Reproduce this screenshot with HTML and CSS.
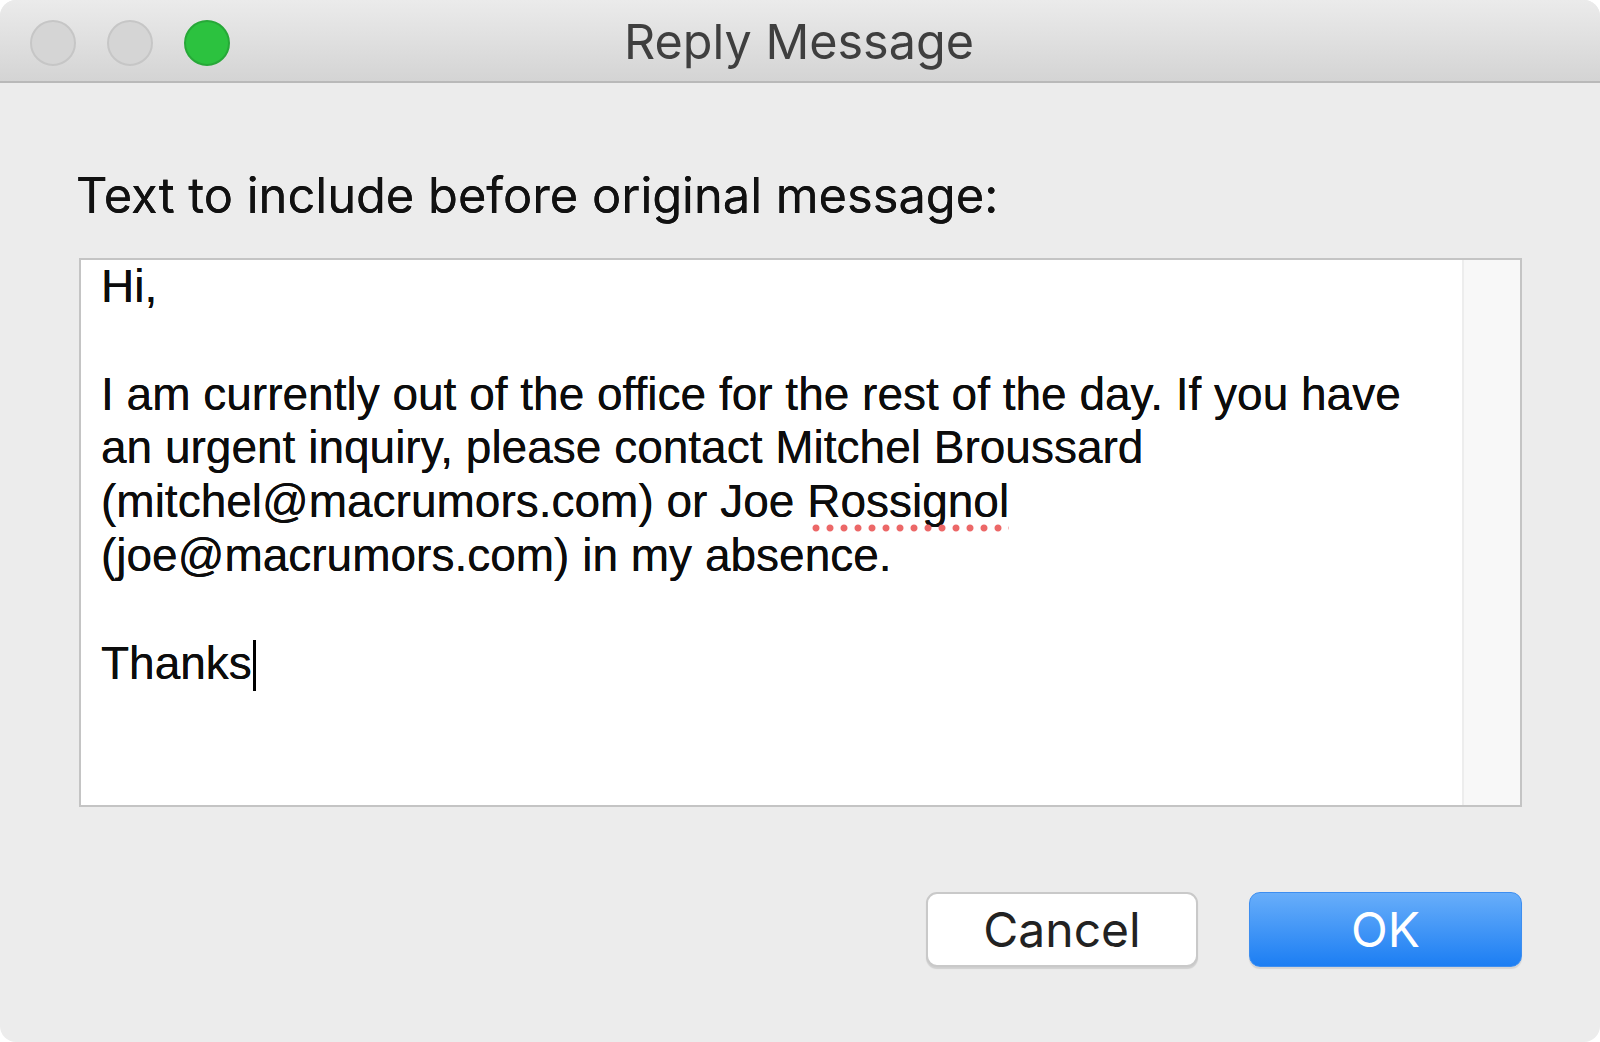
FILE: index.html
```html
<!DOCTYPE html>
<html lang="en">
<head>
<meta charset="utf-8">
<title>Reply Message</title>
<link rel="stylesheet" href="styles.css">
</head>
<body>
<div class="window">
  <header class="titlebar">
    <div class="lights">
      <span class="light light-off"></span>
      <span class="light light-off"></span>
      <span class="light light-zoom"></span>
    </div>
    <div class="title">Reply Message</div>
  </header>
  <main class="content">
    <div class="label">Text to include before original message:</div>
    <div class="textbox">
      <div class="text">
        <p>Hi,</p>
        <p class="blank">&nbsp;</p>
        <p>I am currently out of the office for the rest of the day. If you have</p>
        <p>an urgent inquiry, please contact Mitchel Broussard</p>
        <p>(mitchel@macrumors.com) or Joe <span class="misspelled">Rossignol</span></p>
        <p>(joe@macrumors.com) in my absence.</p>
        <p class="blank">&nbsp;</p>
        <p>Thanks<span class="caret"></span></p>
      </div>
      <div class="scrolltrack"></div>
    </div>
    <div class="buttons">
      <button class="btn btn-cancel">Cancel</button>
      <button class="btn btn-ok">OK</button>
    </div>
  </main>
</div>
</body>
</html>
```

FILE: styles.css
```css
html, body {
  margin: 0;
  padding: 0;
  background: #ffffff;
}
body {
  width: 1600px;
  height: 1042px;
  overflow: hidden;
}
.window {
  width: 1600px;
  height: 1042px;
  background: #ececec;
  border-radius: 16px;
  overflow: hidden;
  display: flex;
  flex-direction: column;
}
.titlebar {
  height: 81px;
  flex: 0 0 auto;
  background: linear-gradient(#ebebeb, #d4d4d4);
  border-bottom: 2px solid #b9b9b9;
  position: relative;
  display: flex;
  align-items: center;
  justify-content: center;
}
.lights {
  position: absolute;
  left: 30px;
  top: 20px;
  display: flex;
  gap: 31px;
}
.light {
  width: 46px;
  height: 46px;
  border-radius: 50%;
  box-sizing: border-box;
}
.light-off {
  background: #d5d5d5;
  border: 2px solid #c6c6c6;
}
.light-zoom {
  background: #2cc23f;
  border: 2px solid #27a838;
}
.title {
  font-family: Inter, "Liberation Sans", sans-serif;
  font-size: 48.5px;
  color: #3f3f3f;
  margin-left: -2px;
  margin-top: 2px;
}
.content {
  flex: 1;
  padding: 86px 78px 0 78px;
  display: flex;
  flex-direction: column;
}
.label {
  font-family: Inter, "Liberation Sans", sans-serif;
  font-size: 48.8px;
  line-height: 54px;
  color: #111111;
  margin-left: -2px;
  text-shadow: 0 0 0.6px #111111;
}
.textbox {
  margin-top: 35px;
  height: 549px;
  box-sizing: border-box;
  border: 2px solid #c4c4c4;
  background: #ffffff;
  display: flex;
  margin-left: 1px;
}
.text {
  flex: 1;
  padding: 0 0 0 20px;
  font-family: "Liberation Sans", Arial, sans-serif;
  font-size: 46px;
  line-height: 53.8px;
  color: #0c0c0c;
  text-shadow: 0 0 0.5px #0c0c0c;
}
.text p {
  margin: 0;
  white-space: nowrap;
}
.misspelled {
  position: relative;
}
.misspelled::after {
  content: "";
  position: absolute;
  left: 2px;
  right: 0;
  bottom: -5px;
  height: 8px;
  background-image: radial-gradient(circle, #ec6868 0 3px, rgba(236,104,104,0.35) 3.6px, transparent 4px);
  background-size: 14px 8px;
  background-repeat: repeat-x;
}
.caret {
  display: inline-block;
  width: 3px;
  height: 51px;
  background: #000;
  vertical-align: -12px;
  margin-left: 1px;
}
.scrolltrack {
  width: 56px;
  background: #f8f8f8;
  border-left: 2px solid #ededed;
}
.buttons {
  margin-top: 85px;
  display: flex;
  justify-content: flex-end;
  gap: 51px;
}
.btn {
  height: 75px;
  border-radius: 11px;
  font-family: Inter, "Liberation Sans", sans-serif;
  font-size: 48px;
  padding: 0;
  box-sizing: border-box;
}
.btn-cancel {
  width: 272px;
  background: #ffffff;
  color: #222222;
  border: 2px solid #c9c9c9;
  box-shadow: 0 2px 1px rgba(0,0,0,0.12);
}
.btn-ok {
  width: 273px;
  background: linear-gradient(#68aefa, #1c7ef3);
  color: #ffffff;
  border: 1px solid #3d8ef0;
  box-shadow: 0 2px 1px rgba(0,0,0,0.1);
}
```
